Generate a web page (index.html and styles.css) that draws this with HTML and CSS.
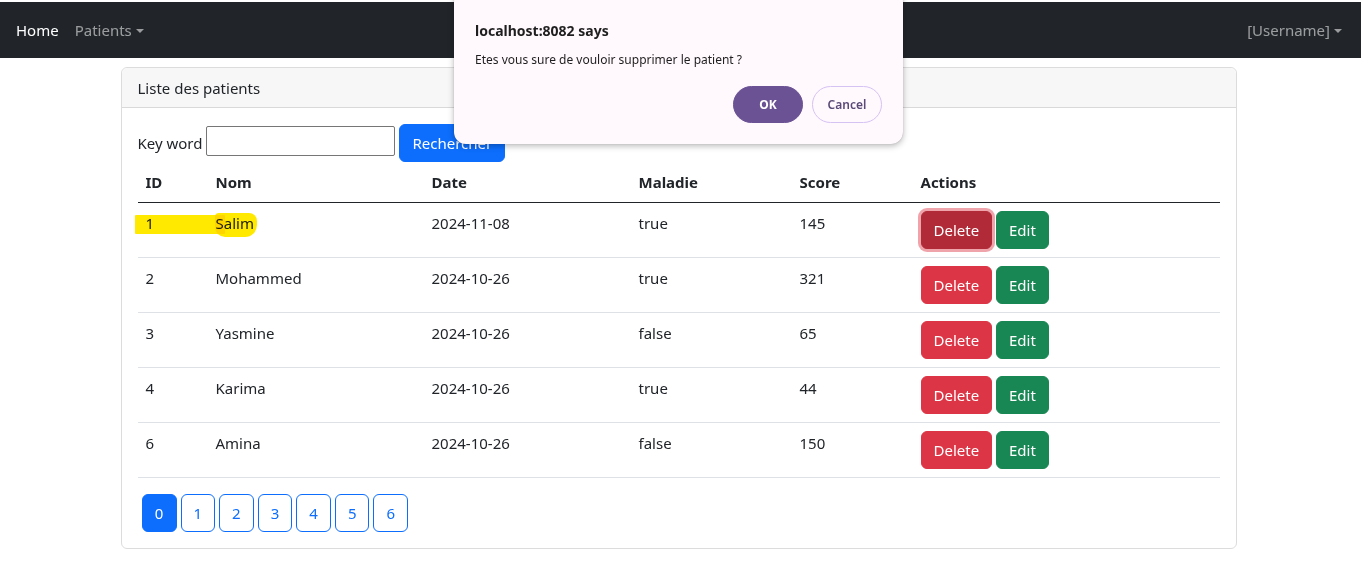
FILE: index.html
```html
<!DOCTYPE html>
<html lang="fr">
<head>
<meta charset="utf-8">
<title>Patients</title>
<link rel="stylesheet" href="styles.css">
</head>
<body>
<nav class="navbar">
  <div class="nav-left">
    <a class="nav-link active" href="#">Home</a>
    <a class="nav-link dropdown" href="#">Patients<span class="caret"></span></a>
  </div>
  <div class="nav-right">
    <a class="nav-link dropdown" href="#">[Username]<span class="caret"></span></a>
  </div>
</nav>

<main class="container">
  <section class="card">
    <div class="card-header">Liste des patients</div>
    <div class="card-body">
      <form class="search">
        <label class="search-label">Key word</label>
        <input class="search-input" type="text">
        <button class="btn btn-primary" type="button">Rechercher</button>
      </form>
      <table class="table">
        <colgroup>
          <col class="c-id"><col class="c-nom"><col class="c-date"><col class="c-mal"><col class="c-score"><col class="c-act">
        </colgroup>
        <thead>
          <tr><th>ID</th><th>Nom</th><th>Date</th><th>Maladie</th><th>Score</th><th>Actions</th></tr>
        </thead>
        <tbody>
          <tr>
            <td class="hl-cell"><span class="highlight"></span><span class="highlight-tail"></span>1</td><td>Salim</td><td>2024-11-08</td><td>true</td><td>145</td>
            <td><button class="btn btn-danger focused">Delete</button> <button class="btn btn-success">Edit</button></td>
          </tr>
          <tr>
            <td>2</td><td>Mohammed</td><td>2024-10-26</td><td>true</td><td>321</td>
            <td><button class="btn btn-danger">Delete</button> <button class="btn btn-success">Edit</button></td>
          </tr>
          <tr>
            <td>3</td><td>Yasmine</td><td>2024-10-26</td><td>false</td><td>65</td>
            <td><button class="btn btn-danger">Delete</button> <button class="btn btn-success">Edit</button></td>
          </tr>
          <tr>
            <td>4</td><td>Karima</td><td>2024-10-26</td><td>true</td><td>44</td>
            <td><button class="btn btn-danger">Delete</button> <button class="btn btn-success">Edit</button></td>
          </tr>
          <tr>
            <td>6</td><td>Amina</td><td>2024-10-26</td><td>false</td><td>150</td>
            <td><button class="btn btn-danger">Delete</button> <button class="btn btn-success">Edit</button></td>
          </tr>
        </tbody>
      </table>
      <ul class="pages">
        <li><a class="btn page active" href="#">0</a></li>
        <li><a class="btn page" href="#">1</a></li>
        <li><a class="btn page" href="#">2</a></li>
        <li><a class="btn page" href="#">3</a></li>
        <li><a class="btn page" href="#">4</a></li>
        <li><a class="btn page" href="#">5</a></li>
        <li><a class="btn page" href="#">6</a></li>
      </ul>
    </div>
  </section>
</main>

<div class="dialog" role="dialog">
  <div class="dialog-title">localhost:8082 says</div>
  <div class="dialog-msg">Etes vous sure de vouloir supprimer le patient ?</div>
  <div class="dialog-actions">
    <button class="dbtn dbtn-ok">OK</button>
    <button class="dbtn dbtn-cancel">Cancel</button>
  </div>
</div>
</body>
</html>
```

FILE: styles.css
```css
* { box-sizing: border-box; }
html, body { margin: 0; }
body {
  font-family: "Noto Sans", "Open Sans", sans-serif;
  font-size: 15px;
  line-height: 24px;
  color: #212529;
  background: #fff;
  padding-top: 2px;
}
a { text-decoration: none; }

.navbar {
  height: 56px;
  background: #212529;
  display: flex;
  align-items: center;
  justify-content: space-between;
  padding: 0 11px 0 8px;
}
.nav-left, .nav-right { display: flex; align-items: center; }
.nav-link {
  color: rgba(255,255,255,.55);
  padding: 8px 8px;
  display: inline-flex;
  align-items: center;
}
.nav-link.active { color: #fff; }
.caret {
  display: inline-block;
  margin-left: 4px;
  width: 0; height: 0;
  border-top: 4px solid rgba(255,255,255,.55);
  border-left: 4px solid transparent;
  border-right: 4px solid transparent;
  position: relative;
  top: 1px;
}

.container {
  width: 1116px;
  margin: 9px auto 0;
  position: relative;
  left: -2px;
}
.card {
  border: 1px solid #dcdcdc;
  border-radius: 6px;
  background: #fff;
}
.card-header {
  height: 40px;
  padding: 8px 16px;
  background: #f7f7f7;
  border-bottom: 1px solid #d9d9d9;
  border-radius: 6px 6px 0 0;
}
.card-body { padding: 16px; }

.search { display: flex; align-items: center; }
.search-label { margin-right: 4px; }
.search-input {
  width: 189px;
  height: 30px;
  border: 1px solid #767676;
  border-radius: 2px;
  font: inherit;
  margin-top: -4px;
}
.btn {
  display: inline-block;
  font: inherit;
  font-size: 15px;
  line-height: 24px;
  padding: 6px 12px;
  border: 1px solid transparent;
  border-radius: 6px;
  color: #fff;
  cursor: pointer;
  vertical-align: middle;
}
.btn-primary { background: #0d6efd; border-color: #0d6efd; margin-left: 4px; }
.btn-danger { background: #dc3545; border-color: #dc3545; }
.btn-danger.focused { background: #b02a37; border-color: #b02a37; box-shadow: 0 0 0 3px rgba(220,53,69,.45); }
.btn-success { background: #198754; border-color: #198754; }

.table {
  width: 100%;
  border-collapse: collapse;
  margin: 0 0 16px;
}
.c-id { width: 70px; }
.c-nom { width: 216px; }
.c-date { width: 207px; }
.c-mal { width: 161px; }
.c-score { width: 121px; }
.c-act { width: 307px; }
.table th {
  text-align: left;
  font-weight: 700;
  padding: 8px;
  border-bottom: 1px solid #212529;
  vertical-align: bottom;
}
.table td {
  padding: 8px;
  border-bottom: 1px solid #dee2e6;
  vertical-align: top;
}
.hl-cell { position: relative; }
.highlight {
  position: absolute;
  left: -3px;
  top: 12px;
  width: 90px;
  height: 19px;
  background: #ffe900;
  border-radius: 1px;
  mix-blend-mode: multiply;
}
.highlight-tail {
  position: absolute;
  left: 77px;
  top: 10px;
  width: 42px;
  height: 24px;
  background: #ffe900;
  border-radius: 4px 8px 12px 10px;
  mix-blend-mode: multiply;
}

.pages {
  list-style: none;
  margin: 0;
  padding: 0;
  display: flex;
}
.pages li { margin-left: 4px; }
.page {
  color: #0d6efd;
  border-color: #0d6efd;
  background: #fff;
  padding: 6px 12px;
  min-width: 34px;
  text-align: center;
}
.page.active { background: #0d6efd; color: #fff; min-width: 35px; }

.dialog {
  position: fixed;
  left: 454px;
  top: -10px;
  width: 449px;
  height: 154px;
  background: #fff8fd;
  border-radius: 12px;
  box-shadow: 0 2px 6px rgba(0,0,0,.28), 0 0 1px rgba(0,0,0,.3);
  padding: 30px 21px 21px 21px;
  display: flex;
  flex-direction: column;
  font-family: "Noto Sans", sans-serif;
}
.dialog-title {
  font-size: 14px;
  font-weight: 700;
  line-height: 22px;
  color: #1f1f1f;
}
.dialog-msg {
  font-size: 12px;
  line-height: 18px;
  margin-top: 9px;
  color: #1f1f1f;
}
.dialog-actions {
  margin-top: auto;
  display: flex;
  justify-content: flex-end;
  gap: 9px;
}
.dbtn {
  width: 70px;
  height: 37px;
  border-radius: 19px;
  font-family: "Noto Sans", sans-serif;
  font-size: 12px;
  font-weight: 600;
}
.dbtn-ok { background: #6b5294; border: 1px solid #6b5294; color: #fff; font-weight: 700; }
.dbtn-cancel { background: transparent; border: 1px solid #d5c3f3; color: #5a4a78; }
```
